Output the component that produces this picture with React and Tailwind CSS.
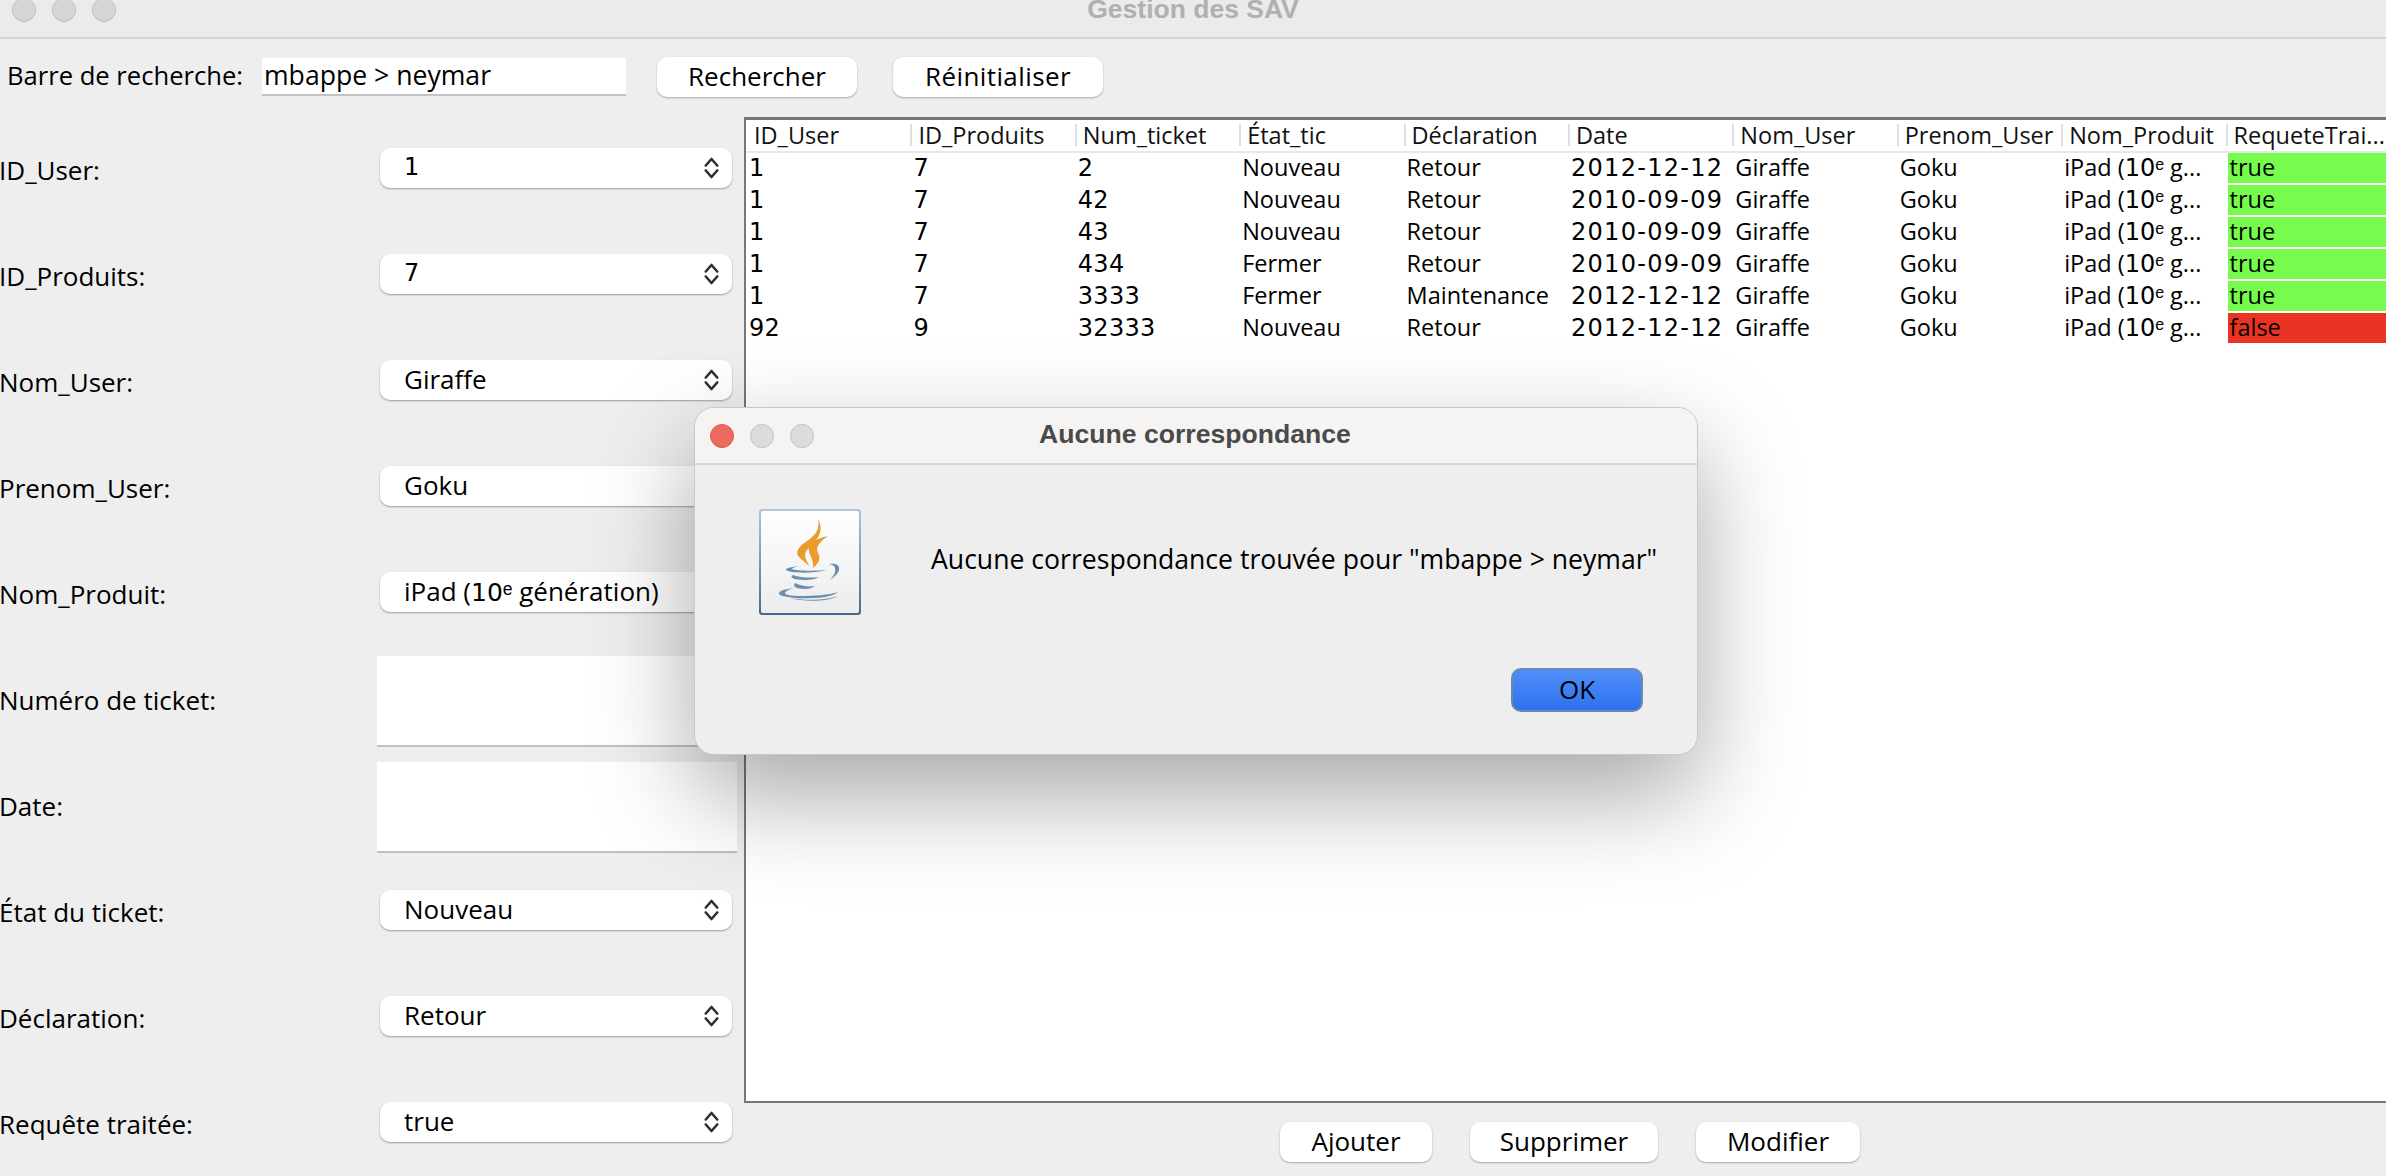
import React from "react";

const font = "font-['Open_Sans','Liberation_Sans',sans-serif]";
const digits = "font-['DejaVu_Sans',sans-serif]";

const fields = [
  { label: "ID_User:", value: "1", num: true },
  { label: "ID_Produits:", value: "7", num: true },
  { label: "Nom_User:", value: "Giraffe" },
  { label: "Prenom_User:", value: "Goku" },
  {
    label: "Nom_Produit:",
    value: (
      <>
        iPad (<span className={`${digits} text-[25px]`}>10</span>ᵉ génération)
      </>
    ),
  },
  { label: "Numéro de ticket:", input: true },
  { label: "Date:", input: true },
  { label: "État du ticket:", value: "Nouveau" },
  { label: "Déclaration:", value: "Retour" },
  { label: "Requête traitée:", value: "true" },
];

const columns = [
  "ID_User",
  "ID_Produits",
  "Num_ticket",
  "État_tic",
  "Déclaration",
  "Date",
  "Nom_User",
  "Prenom_User",
  "Nom_Produit",
  "RequeteTrai...",
];

const rows = [
  ["1", "7", "2", "Nouveau", "Retour", "2012-12-12", "true"],
  ["1", "7", "42", "Nouveau", "Retour", "2010-09-09", "true"],
  ["1", "7", "43", "Nouveau", "Retour", "2010-09-09", "true"],
  ["1", "7", "434", "Fermer", "Retour", "2010-09-09", "true"],
  ["1", "7", "3333", "Fermer", "Maintenance", "2012-12-12", "true"],
  ["92", "9", "32333", "Nouveau", "Retour", "2012-12-12", "false"],
];

const UpDown = () => (
  <svg width="15" height="22" viewBox="0 0 15 22" fill="none" stroke="#2f2f2f" strokeWidth="2.6" strokeLinecap="round" strokeLinejoin="round">
    <path d="M1.8 8.5 L7.5 2 L13.2 8.5" />
    <path d="M1.8 13.5 L7.5 20 L13.2 13.5" />
  </svg>
);

const Select = ({ value, num }) => (
  <div className="flex h-10 w-[352px] items-center justify-between rounded-[10px] bg-white pl-6 pr-[13px] shadow-[0_1px_2px_rgba(0,0,0,0.35)]">
    <span className={`-mt-0.5 ${num ? `${digits} text-[24px]` : ""}`}>{value}</span>
    <UpDown />
  </div>
);

const Button = ({ children, className }) => (
  <button className={`flex h-10 items-center justify-center rounded-[10px] bg-white pb-0.5 shadow-[0_1px_2px_rgba(0,0,0,0.3)] ${className}`}>
    {children}
  </button>
);

const TrafficLight = ({ className }) => (
  <span className={`h-6 w-6 rounded-full border ${className}`}></span>
);

const JavaIcon = () => (
  <div className="h-[106px] w-[102px] rounded-[3px] bg-gradient-to-b from-[#b4c6d9] to-[#456a8e] p-0.5">
    <div className="h-full w-full rounded-[2px] bg-gradient-to-b from-white to-[#ececec]">
      <svg width="98" height="102" viewBox="0 0 98 102" fill="#6a8fae">
        <path fill="#e99b2e" d="M57 8 C59 18 55 24 46 30 C37 36 33 42 39 47 C42 50 45 52 48 55 C45 48 42 44 46 39 C53 31 65 23 57 8Z" />
        <path fill="#e99b2e" d="M67 25 C56 27 46 33 48 40 C49 46 53 49 52 57 C58 52 60 47 57 42 C54 37 58 31 67 25Z" />
        <path d="M38 55 C28 56 24 58 25 59 C28 62 50 63 66 59 C54 60 36 60 31 58 C31 57 34 56 38 55Z" />
        <path d="M68 53 C76 52 79 55 78 59 C77 63 73 66 69 69 C72 65 75 62 74 58 C74 55 72 54 68 53Z" />
        <path d="M32 64 C28 66 32 69 44 69 C50 69 55 68 58 66 C50 67 40 67 32 64Z" />
        <path d="M34 72 C31 75 35 78 44 78 C48 78 52 77 54 75 C47 76 40 75 34 72Z" />
        <path d="M34 77 C24 78 17 80 18 83 C20 86 38 88 50 87 C62 87 72 85 77 81 C68 84 52 85 40 85 C30 85 24 84 24 82 C25 80 28 78 34 77Z" />
        <path d="M29 87 C42 91 66 91 77 85 C66 89 46 90 29 87Z" />
      </svg>
    </div>
  </div>
);

const cellFont = (j) => {
  if (j === 5) return `${digits} text-[24px] tracking-[1.3px]`;
  if (j < 3) return `${digits} text-[24px] tracking-[0.3px]`;
  return "";
};

export default function App() {
  return (
    <div className={`relative flex h-[1176px] w-[2386px] flex-col overflow-hidden bg-[#eeeeee] text-[26px] leading-none text-black ${font}`}>
      {/* Title bar */}
      <div className="relative flex h-[39px] shrink-0 items-start justify-center border-b-2 border-[#d4d4d4] bg-[#ebebea]">
        <div className="absolute left-3 top-[-2px] flex gap-4">
          <TrafficLight className="border-[#bdbdbb] bg-[#d5d5d3]" />
          <TrafficLight className="border-[#bdbdbb] bg-[#d5d5d3]" />
          <TrafficLight className="border-[#bdbdbb] bg-[#d5d5d3]" />
        </div>
        <span className="-mt-1 font-['Liberation_Sans',sans-serif] text-[26.5px] font-bold text-[#b0b0b0]">
          Gestion des SAV
        </span>
      </div>

      {/* Search bar */}
      <div className="flex h-[78px] shrink-0 items-center pb-0.5 pl-[7px]">
        <span className="-mt-0.5 w-[255px] text-[25.6px]">Barre de recherche:</span>
        <div className="flex h-[38px] w-[364px] items-center border-b-2 border-[#c4c4c4] bg-white pb-0.5 pl-0.5 text-[26.6px]">
          mbappe &gt; neymar
        </div>
        <Button className="ml-[31px] w-[200px]">Rechercher</Button>
        <Button className="ml-9 w-[210px] tracking-[0.4px]">Réinitialiser</Button>
      </div>

      <div className="flex min-h-0 flex-1">
        {/* Form */}
        <div className="grid w-[744px] shrink-0 grid-rows-[repeat(10,106px)]">
          {fields.map((field) => (
            <div key={field.label} className="flex items-center">
              <span className="w-[377px] shrink-0 -indent-[1px]">{field.label}</span>
              {field.input ? (
                <div className="mt-0.5 h-[91px] w-[360px] border-b-2 border-[#c0c0c0] bg-white"></div>
              ) : (
                <div className="-mt-1 ml-[3px]">
                  <Select value={field.value} num={field.num} />
                </div>
              )}
            </div>
          ))}
        </div>

        {/* Table and actions */}
        <div className="flex min-w-0 flex-1 flex-col">
          <div className="h-[986px] overflow-hidden border-b-2 border-l-2 border-t-[3px] border-[#777777] bg-white">
            <table className="w-[1644px] table-fixed border-collapse text-[23.5px]">
              <thead>
                <tr className="h-[32px] border-b-2 border-[#e8e8e8]">
                  {columns.map((col, i) => (
                    <th key={col} className="relative pl-2 text-left font-normal text-[#111]">
                      {i > 0 && <span className="absolute bottom-[5px] left-0 h-[22px] w-0.5 bg-[#e0e0e0]"></span>}
                      {col}
                    </th>
                  ))}
                </tr>
              </thead>
              <tbody>
                {rows.map((row, i) => (
                  <tr key={i} className="h-8">
                    {row.slice(0, 6).map((cell, j) => (
                      <td key={j} className={`whitespace-nowrap pb-0.5 pl-[3px] ${cellFont(j)}`}>{cell}</td>
                    ))}
                    <td className="pb-0.5 pl-[3px]">Giraffe</td>
                    <td className="pb-0.5 pl-[3px]">Goku</td>
                    <td className="whitespace-nowrap pb-0.5 pl-[3px]">
                      iPad (<span className={`${digits} text-[24px]`}>10</span>ᵉ g...
                    </td>
                    <td className="p-0 pb-0.5 pl-0.5">
                      <div className={`flex h-[30px] items-center pl-0.5 ${row[6] === "true" ? "bg-[#77fb4f]" : "bg-[#ea3323]"}`}>
                        {row[6]}
                      </div>
                    </td>
                  </tr>
                ))}
              </tbody>
            </table>
          </div>
          <div className="flex flex-1 items-center justify-center gap-[38px] pl-[10px] pt-1">
            <Button className="w-[152px]">Ajouter</Button>
            <Button className="w-[188px]">Supprimer</Button>
            <Button className="w-[164px]">Modifier</Button>
          </div>
        </div>
      </div>

      {/* Dialog */}
      <div className="absolute left-[694px] top-[407px] flex h-[348px] w-[1004px] flex-col overflow-hidden rounded-[20px] border border-[#c8c8c8] bg-[#eeeeee] shadow-[0_40px_100px_rgba(0,0,0,0.35)]">
        <div className="relative flex h-[57px] shrink-0 items-center justify-center border-b-2 border-[#d6d6d4] bg-[#f5f4f3]">
          <div className="absolute left-[15px] flex gap-4">
            <TrafficLight className="border-[#e0564b] bg-[#ee6a5f]" />
            <TrafficLight className="border-[#c4c3c1] bg-[#dedcda]" />
            <TrafficLight className="border-[#c4c3c1] bg-[#dedcda]" />
          </div>
          <span className="-mt-0.5 -ml-0.5 font-['Liberation_Sans',sans-serif] text-[26.6px] font-bold text-[#4a4a4a]">
            Aucune correspondance
          </span>
        </div>
        <div className="flex flex-1 flex-col pl-[64px] pr-[54px] pt-11">
          <div className="flex items-center gap-[70px]">
            <JavaIcon />
            <span className="-mt-1.5 whitespace-nowrap text-[26.6px]">Aucune correspondance trouvée pour "mbappe &gt; neymar"</span>
          </div>
          <div className="mt-[53px] flex justify-end">
            <button className="h-11 w-[132px] rounded-[10px] border-2 border-[#6d87ad] bg-gradient-to-b from-[#4f8ff8] to-[#2f70ef] pb-0.5">
              OK
            </button>
          </div>
        </div>
      </div>
    </div>
  );
}
